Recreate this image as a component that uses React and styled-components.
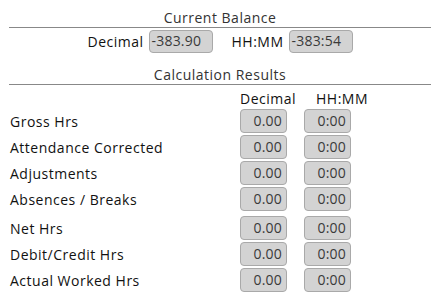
import styled, { createGlobalStyle } from "styled-components";

const GlobalStyle = createGlobalStyle`
    body {
        margin: 0;
        background: #ffffff;
        font-family: "Open Sans", "DejaVu Sans", sans-serif;
        letter-spacing: 0.5px;
        color: #222;
    }
`;

const rows = [
    { label: "Gross Hrs", dec: "0.00", hm: "0:00" },
    { label: "Attendance Corrected", dec: "0.00", hm: "0:00" },
    { label: "Adjustments", dec: "0.00", hm: "0:00" },
    { label: "Absences / Breaks", dec: "0.00", hm: "0:00" },
    { label: "Net Hrs", dec: "0.00", hm: "0:00", spaced: true },
    { label: "Debit/Credit Hrs", dec: "0.00", hm: "0:00" },
    { label: "Actual Worked Hrs", dec: "0.00", hm: "0:00" },
];

const App = () => {
    return (
        <Page>
            <GlobalStyle />
            <SectionTitle>Current Balance</SectionTitle>
            <BalanceRow>
                <Label>Decimal</Label>
                <ValueBox $align="left">-383.90</ValueBox>
                <Label $spaced>HH:MM</Label>
                <ValueBox $align="left">-383:54</ValueBox>
            </BalanceRow>

            <SectionTitle>Calculation Results</SectionTitle>
            <ResultsGrid>
                <span />
                <ColHead>Decimal</ColHead>
                <ColHead $indent={12}>HH:MM</ColHead>
                {rows.map((row) => (
                    <ResultRow key={row.label} $spaced={row.spaced}>
                        <RowLabel>{row.label}</RowLabel>
                        <ValueBox $align="right" $small>{row.dec}</ValueBox>
                        <ValueBox $align="right" $small>{row.hm}</ValueBox>
                    </ResultRow>
                ))}
            </ResultsGrid>
        </Page>
    );
};

const Page = styled.div`
    width: 440px;
    padding-top: 8px;
`;

const SectionTitle = styled.div`
    margin: 0 9px;
    text-align: center;
    font-size: 14px;
    color: #333;
    line-height: 19px;
    border-bottom: 1px solid #888;
`;

const BalanceRow = styled.div`
    display: flex;
    justify-content: center;
    align-items: center;
    padding: 2px 0 12px;
`;

const Label = styled.span`
    font-size: 14px;
    font-weight: 500;
    color: #111;
    margin-left: ${(p) => (p.$spaced ? "19px" : "0")};
    margin-right: 5px;
`;

const ValueBox = styled.div`
    box-sizing: border-box;
    width: ${(p) => (p.$small ? "47px" : "64px")};
    height: ${(p) => (p.$small ? "24px" : "23px")};
    padding: ${(p) => (p.$small ? "2px 4px 0" : "1px 2px 0")};
    background: #d3d3d3;
    border: 1px solid #a9a9a9;
    border-radius: 4px;
    font-size: 14px;
    letter-spacing: 0.2px;
    color: #3a3a3a;
    text-align: ${(p) => p.$align};
    line-height: 18px;
`;

const ResultsGrid = styled.div`
    display: grid;
    grid-template-columns: 230px 64px 64px;
    align-items: center;
    padding: 5px 0 0 10px;
`;

const ColHead = styled.div`
    font-size: 14px;
    font-weight: 500;
    color: #111;
    padding-left: ${(p) => p.$indent || 0}px;
    line-height: 17px;
`;

const ResultRow = styled.div`
    display: contents;

    & > * {
        margin-top: ${(p) => (p.$spaced ? "5px" : "2px")};
    }
`;

const RowLabel = styled.div`
    font-size: 14px;
    font-weight: 500;
    color: #111;
`;

export default App;
